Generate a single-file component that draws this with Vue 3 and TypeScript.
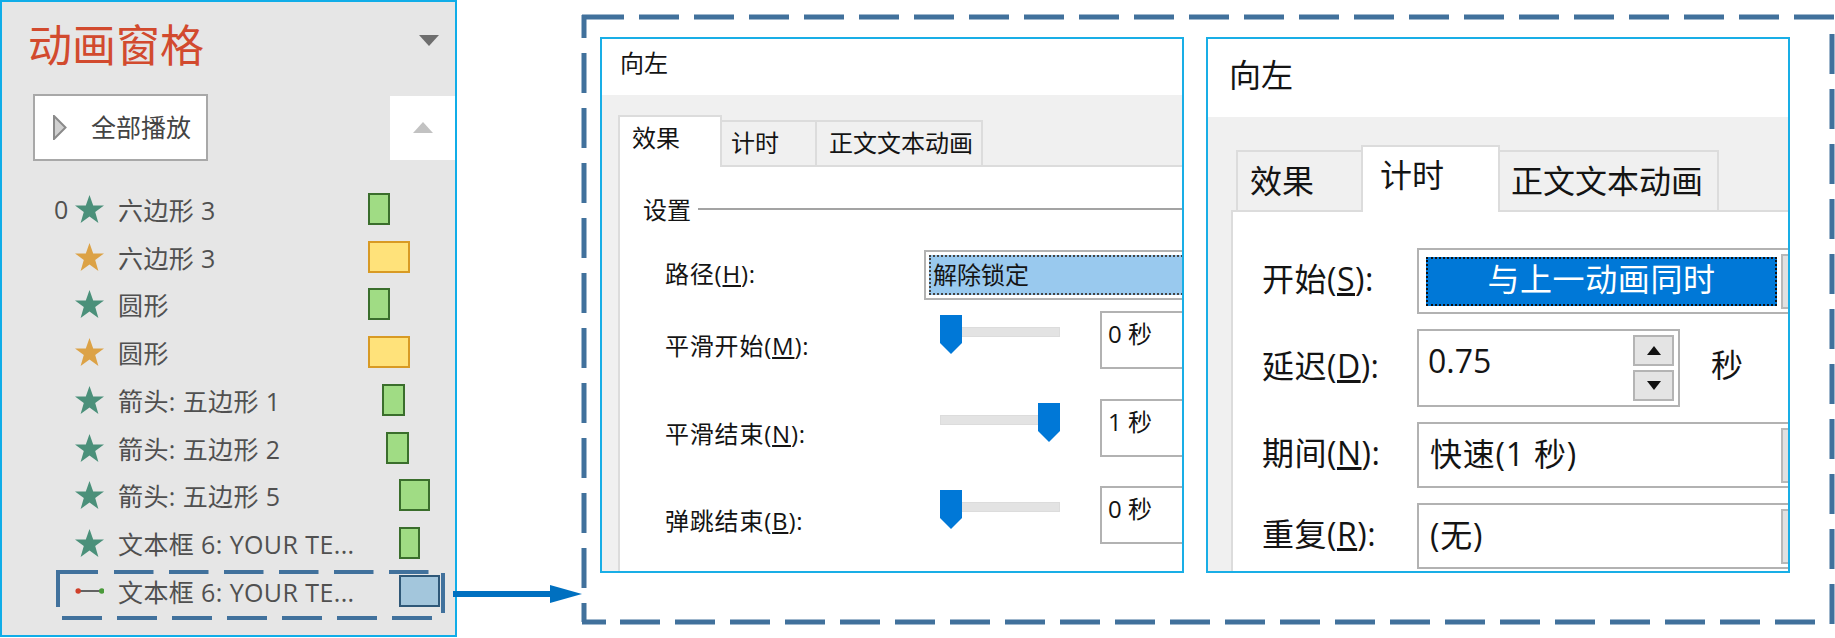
<script setup lang="ts">
interface Row { num?: string; text: string; icon: 'green' | 'orange' | 'line'; kind: 'g' | 'y' | 'b'; left: number; width: number }
const rows: Row[] = [
  { num: '0', text: '六边形 3', icon: 'green', kind: 'g', left: 0, width: 22 },
  { text: '六边形 3', icon: 'orange', kind: 'y', left: 0, width: 42 },
  { text: '圆形', icon: 'green', kind: 'g', left: 0, width: 22 },
  { text: '圆形', icon: 'orange', kind: 'y', left: 0, width: 42 },
  { text: '箭头: 五边形 1', icon: 'green', kind: 'g', left: 14, width: 23 },
  { text: '箭头: 五边形 2', icon: 'green', kind: 'g', left: 18, width: 23 },
  { text: '箭头: 五边形 5', icon: 'green', kind: 'g', left: 31, width: 31 },
  { text: '文本框 6: YOUR TE...', icon: 'green', kind: 'g', left: 31, width: 21 },
  { text: '文本框 6: YOUR TE...', icon: 'line', kind: 'b', left: 31, width: 41 }
]
const sliders = [
  { label: '平滑开始(', key: 'M', pos: 0, value: '0 秒' },
  { label: '平滑结束(', key: 'N', pos: 98, value: '1 秒' },
  { label: '弹跳结束(', key: 'B', pos: 0, value: '0 秒' }
]
const starPoints = '14.5,0 18.2,10.4 29,10.4 20.2,17 23.4,28 14.5,21.4 5.6,28 8.8,17 0,10.4 10.8,10.4'
</script>

<template>
  <div class="page">
    <section class="pane">
      <header class="pane-head">
        <h1>动画窗格</h1>
        <i class="caret"></i>
      </header>
      <div class="toolbar">
        <button class="play">
          <svg width="14" height="25" viewBox="0 0 14 25"><path d="M1 1 L12.5 12.5 L1 24 Z" fill="#d0d0d0" stroke="#8a8a8a" stroke-width="2"/></svg>
          <span>全部播放</span>
        </button>
        <div class="scroll-up"><i></i></div>
      </div>
      <ul class="list">
        <li v-for="(r, i) in rows" :key="i" class="row">
          <span class="num">{{ r.num }}</span>
          <svg v-if="r.icon !== 'line'" class="star" width="29" height="28" viewBox="0 0 29 28">
            <polygon :points="starPoints" :fill="r.icon === 'green' ? '#4b907a' : '#dca246'"/>
          </svg>
          <svg v-else class="star" width="32" height="12" viewBox="0 0 32 12">
            <line x1="4" y1="6" x2="30" y2="6" stroke="#555" stroke-width="2"/>
            <circle cx="3.5" cy="6" r="3" fill="#d0402a"/>
            <circle cx="29.5" cy="6" r="3" fill="#4a9a3a"/>
          </svg>
          <span class="row-text">{{ r.text }}</span>
          <i class="bar" :class="r.kind" :style="{ marginLeft: r.left + 'px', width: r.width + 'px' }"></i>
        </li>
      </ul>
    </section>

    <section class="dialog small">
      <div class="dlg-title">向左</div>
      <div class="dlg-body">
        <div class="tabs">
          <span class="tab active t1">效果</span>
          <span class="tab t2">计时</span>
          <span class="tab t3">正文文本动画</span>
        </div>
        <div class="content">
          <div class="legend"><span>设置</span><i></i></div>
          <div class="path-row">
            <label>路径(<u>H</u>):</label>
            <div class="path-combo"><div class="selected">解除锁定</div></div>
          </div>
          <div v-for="s in sliders" :key="s.key" class="slide-row">
            <label>{{ s.label }}<u>{{ s.key }}</u>):</label>
            <div class="slider">
              <i class="track"></i>
              <svg class="thumb" :style="{ left: s.pos + 'px' }" width="22" height="39" viewBox="0 0 22 39"><path d="M0 0 H22 V28 L11 39 L0 28 Z" fill="#0078d7"/></svg>
            </div>
            <div class="value">{{ s.value }}</div>
          </div>
        </div>
      </div>
    </section>

    <section class="dialog large">
      <div class="dlg-title">向左</div>
      <div class="dlg-body">
        <div class="tabs">
          <span class="tab t1">效果</span>
          <span class="tab active t2">计时</span>
          <span class="tab t3">正文文本动画</span>
        </div>
        <div class="content">
          <div class="form">
            <label>开始(<u>S</u>):</label>
            <div class="combo"><div class="field"><div class="start">与上一动画同时</div></div><i class="drop"></i></div>

            <label>延迟(<u>D</u>):</label>
            <div class="delay">
              <div class="spin">
                <span>0.75</span>
                <div class="spin-btns">
                  <b><svg width="14" height="9" viewBox="0 0 14 9"><path d="M7 0 L14 9 H0 Z" fill="#111"/></svg></b>
                  <b><svg width="14" height="9" viewBox="0 0 14 9"><path d="M0 0 H14 L7 9 Z" fill="#111"/></svg></b>
                </div>
              </div>
              <span class="unit">秒</span>
            </div>

            <label>期间(<u>N</u>):</label>
            <div class="combo"><div class="field text">快速(1 秒)</div><i class="drop"></i></div>

            <label>重复(<u>R</u>):</label>
            <div class="combo"><div class="field text">(无)</div><i class="drop"></i></div>
          </div>
        </div>
      </div>
    </section>

    <svg class="notes" width="1835" height="638" viewBox="0 0 1835 638" fill="none">
      <g stroke="#41719c" stroke-width="5">
        <path d="M582 17 H624"/>
        <path d="M639 17 H1835" stroke-dasharray="40 15"/>
        <path d="M584 15 V38"/>
        <path d="M584 53 V622" stroke-dasharray="40 15"/>
        <path d="M582 622 H606"/>
        <path d="M620 622 H1815" stroke-dasharray="40 15"/>
        <path d="M1832 34 V624" stroke-dasharray="40 15"/>
      </g>
      <g stroke="#41719c" stroke-width="4">
        <path d="M56 572 H98"/>
        <path d="M114 572 H430" stroke-dasharray="39.5 15.5"/>
        <path d="M58 572 V607"/>
        <path d="M62 618 H434" stroke-dasharray="40 15"/>
        <path d="M443 573 V613"/>
      </g>
      <path d="M453 594 H552" stroke="#0070c0" stroke-width="6"/>
      <path d="M550 585 L582 594 L550 603 Z" fill="#0070c0"/>
    </svg>
  </div>
</template>

<style scoped>
.page {
  position: relative;
  display: flex;
  align-items: flex-start;
  width: 1835px;
  height: 638px;
  overflow: hidden;
  background: #fff;
  font-family: "Open Sans", "Noto Sans CJK SC", sans-serif;
}
ul, h1 { margin: 0; padding: 0; list-style: none; }
i { display: block; }
label { display: block; }

/* animation pane */
.pane {
  flex: none;
  width: 457px;
  height: 637px;
  box-sizing: border-box;
  border: 2px solid #10ade8;
  background: #e6e6e6;
  color: #505050;
}
.pane-head {
  display: flex;
  justify-content: space-between;
  align-items: center;
  height: 84px;
  padding: 0 16px 0 26px;
}
h1 {
  font-size: 44px;
  font-weight: 400;
  line-height: 1;
  color: #d24a2e;
  margin-top: 2px;
}
.caret {
  width: 0;
  height: 0;
  margin-top: -8px;
  border-left: 10px solid transparent;
  border-right: 10px solid transparent;
  border-top: 11px solid #6e6e6e;
}
.toolbar {
  display: flex;
  justify-content: space-between;
  align-items: center;
  margin: 8px 0 0 31px;
  height: 67px;
}
.play {
  display: flex;
  align-items: center;
  width: 175px;
  height: 67px;
  padding: 0 0 0 18px;
  box-sizing: border-box;
  background: #fff;
  border: 2px solid #a8a8a8;
  font: inherit;
  font-size: 25px;
  color: #444;
}
.play span { margin: -4px 0 0 24px; }
.scroll-up {
  display: flex;
  align-items: center;
  justify-content: center;
  width: 65px;
  height: 64px;
  background: #fff;
}
.scroll-up i {
  width: 0;
  height: 0;
  border-left: 10px solid transparent;
  border-right: 10px solid transparent;
  border-bottom: 11px solid #c2c2c2;
}
.list { margin-top: 24px; padding-left: 52px; }
.row {
  display: flex;
  align-items: center;
  height: 47.75px;
  font-size: 25px;
  letter-spacing: 0.4px;
  white-space: nowrap;
}
.num { width: 21px; flex: none; }
.star { flex: none; width: 29px; }
.row-text { flex: none; width: 250px; margin-left: 14px; }
.bar { flex: none; height: 32px; box-sizing: border-box; border: 2px solid; }
.bar.g { background: #a0dc84; border-color: #3a6e2c; }
.bar.y { background: #ffe27a; border-color: #d89a24; }
.bar.b { background: #a3c6dc; border-color: #2f5878; }

/* dialogs */
.dialog {
  flex: none;
  display: flex;
  flex-direction: column;
  width: 584px;
  height: 536px;
  box-sizing: border-box;
  margin-top: 37px;
  border: 2px solid #19aee6;
  overflow: hidden;
  background: #fff;
  color: #141414;
}
.dlg-body {
  flex: 1;
  background: #f0f0f0;
  min-height: 0;
}
.tabs { display: flex; align-items: flex-end; position: relative; }
.tab {
  box-sizing: border-box;
  display: flex;
  border: 2px solid #dcdcdc;
  border-bottom: 0;
  margin-left: -2px;
  background: #f0f0f0;
}
.tab.active {
  background: #fff;
  position: relative;
  margin-bottom: -2px;
  z-index: 1;
}
.content {
  background: #fff;
  border-top: 2px solid #dcdcdc;
  border-left: 2px solid #dcdcdc;
  height: 100%;
}

.small { margin-left: 143px; font-size: 24px; }
.small .dlg-title { height: 56px; line-height: 48px; padding-left: 18px; box-sizing: border-box; }
.small .tabs { padding: 20px 0 0 18px; }
.small .content { margin-left: 16px; }
.small .tab { height: 45px; line-height: 42px; }
.small .tab.active { height: 52px; line-height: 42px; }
.small .t1 { width: 104px; padding-left: 12px; }
.small .t2 { width: 97px; padding-left: 9px; }
.small .t3 { width: 168px; padding-left: 12px; }
.legend {
  display: flex;
  align-items: center;
  gap: 7px;
  height: 40px;
  margin: 21px 0 2px 23px;
}
.legend i { flex: 1; height: 2px; background: #a3a3a3; margin-top: 2px; }
.path-row {
  display: flex;
  align-items: center;
  height: 50px;
  margin-top: 22px;
}
.path-row label { flex: none; width: 304px; padding: 0 0 6px 45px; box-sizing: border-box; letter-spacing: 0.8px; }
.path-combo {
  flex: none;
  width: 300px;
  height: 50px;
  box-sizing: border-box;
  border: 2px solid #b2b2b2;
  padding: 3px;
  background: #fff;
}
.selected {
  height: 40px;
  box-sizing: border-box;
  border: 2px dotted #444;
  background: #99c9ee;
  line-height: 35px;
  padding-left: 2px;
}
.slide-row {
  display: grid;
  grid-template-columns: 304px 176px 120px;
  height: 87.5px;
}
.path-row + .slide-row { margin-top: 11px; }
.slide-row label { padding: 20px 0 0 45px; line-height: 30px; letter-spacing: 0.8px; }
.slider { position: relative; margin: 4px 0 0 16px; width: 120px; height: 39px; }
.track {
  margin-top: 12px;
  height: 8px;
  background: #e3e3e3;
  border: 1px solid #dcdcdc;
}
.thumb { position: absolute; top: 0; }
.value {
  box-sizing: border-box;
  height: 58px;
  border: 2px solid #b2b2b2;
  padding-left: 6px;
  line-height: 42px;
}

.large { margin-left: 22px; font-size: 32px; }
.large .dlg-title { height: 78px; line-height: 72px; padding-left: 21px; box-sizing: border-box; }
.large .tabs { padding: 28px 0 0 30px; }
.large .content { margin-left: 23px; }
.large .tab { height: 60px; line-height: 58px; }
.large .tab.active { height: 67px; line-height: 56px; }
.large .t1 { width: 127px; padding-left: 12px; }
.large .t2 { width: 139px; padding-left: 17px; }
.large .t3 { width: 221px; padding-left: 11px; }
.form {
  display: grid;
  grid-template-columns: 155px 420px;
  align-items: center;
  row-gap: 15px;
  padding: 36px 0 0 29px;
}
.form label { margin: -3px 0 6px; letter-spacing: 0.5px; }
.combo {
  display: flex;
  align-items: center;
  height: 66px;
  box-sizing: border-box;
  border: 2px solid #b2b2b2;
  background: #fff;
}
.field { flex: none; width: 362px; }
.field.text { padding-left: 11px; box-sizing: border-box; margin-top: -6px; letter-spacing: 0.8px; }
.start {
  width: 351px;
  height: 49px;
  margin-left: 7px;
  box-sizing: border-box;
  border: 2px dotted #111;
  background: #0078d7;
  color: #fff;
  text-align: center;
  line-height: 40px;
  letter-spacing: 0.6px;
}
.drop {
  flex: none;
  width: 30px;
  height: 55px;
  box-sizing: border-box;
  background: #e1e1e1;
  border: 2px solid #b8b8b8;
}
.delay { display: flex; align-items: center; }
.spin {
  display: flex;
  justify-content: space-between;
  width: 263px;
  height: 78px;
  box-sizing: border-box;
  border: 2px solid #b2b2b2;
  padding: 4px 4px 4px 9px;
}
.spin span { line-height: 52px; }
.spin-btns { display: flex; flex-direction: column; gap: 4px; }
.spin-btns b {
  display: flex;
  align-items: center;
  justify-content: center;
  width: 41px;
  height: 31px;
  box-sizing: border-box;
  background: #e4e4e4;
  border: 2px solid #b4b4b4;
}
.unit { margin: -10px 0 0 31px; }

.notes { position: absolute; inset: 0; pointer-events: none; }
</style>
